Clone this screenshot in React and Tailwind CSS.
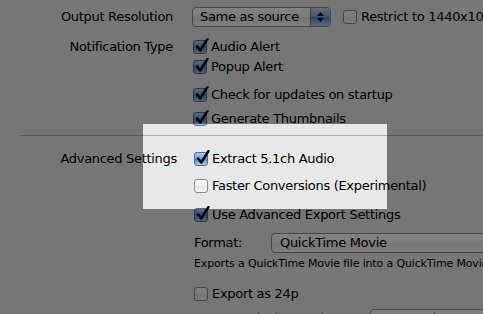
import React from 'react';

const font = { fontFamily: '"Lucida Grande", "DejaVu Sans", sans-serif' };

const Check = ({ checked }) => (
    <span
        className={`relative inline-block w-[14px] h-[14px] shrink-0 rounded-[3px] border ${
            checked
                ? 'border-[#4a6a9a] bg-[linear-gradient(#b5cdf0,#6a9ae0_50%,#4a80d6_51%,#a8d0f8)]'
                : 'border-[#8a8a8a] bg-[linear-gradient(#ffffff,#f0f0f0_50%,#e2e2e2_51%,#fafafa)]'
        }`}
    >
        {checked && (
            <svg className="absolute left-[1px] top-[-3px]" width="14" height="15" viewBox="0 0 14 15">
                <path d="M2 8.5 L5.2 12.5 L12.5 1" fill="none" stroke="#000" strokeWidth="2.4" strokeLinecap="round" strokeLinejoin="round" />
            </svg>
        )}
    </span>
);

const CheckRow = ({ checked, children, className = '' }) => (
    <div className={`flex items-center gap-[4px] h-[20px] ${className}`}>
        <Check checked={checked} />
        <span className="whitespace-nowrap">{children}</span>
    </div>
);

const Label = ({ children, w = 'w-[173px]' }) => (
    <div className={`${w} shrink-0 text-right whitespace-nowrap`}>{children}</div>
);

// aqua popup button face
const popup = 'h-[20px] shrink-0 rounded-[4px] border border-[#8c8c8c] bg-[linear-gradient(#ffffff,#f4f4f4_50%,#e6e6e6_51%,#fbfbfb)] pl-[8px] leading-[18px] whitespace-nowrap';

export default function App() {
    return (
        <div className="relative w-[483px] h-[314px] overflow-hidden bg-[#e8e8e8] text-[13px] tracking-[-0.3px] text-black" style={font}>
            <div className="flex flex-col pt-[7px]">
                <div className="flex items-center h-[20px]">
                    <Label>Output Resolution</Label>
                    <div className="ml-[19px] w-[139px] h-[20px] shrink-0 flex rounded-[4px] border border-[#8c8c8c] overflow-hidden bg-[linear-gradient(#ffffff,#f4f4f4_50%,#e6e6e6_51%,#fbfbfb)]">
                        <span className="flex-1 pl-[7px] leading-[18px]">Same as source</span>
                        <span className="w-[20px] border-l border-[#6a7fa0] bg-[linear-gradient(#c2d6f2,#7ca4e0_50%,#5a8ad8_51%,#a9cdf5)] flex flex-col items-center justify-center gap-[2px]">
                            <svg width="7" height="4" viewBox="0 0 7 4"><path d="M0 4 L3.5 0 L7 4 Z" fill="#111" /></svg>
                            <svg width="7" height="4" viewBox="0 0 7 4"><path d="M0 0 L3.5 4 L7 0 Z" fill="#111" /></svg>
                        </span>
                    </div>
                    <CheckRow className="ml-[12px]">Restrict to 1440x1080</CheckRow>
                </div>

                <div className="flex mt-[10px]">
                    <Label><div className="h-[20px] leading-[20px]">Notification Type</div></Label>
                    <div className="ml-[20px] flex flex-col">
                        <CheckRow checked>Audio Alert</CheckRow>
                        <CheckRow checked>Popup Alert</CheckRow>
                        <CheckRow checked className="mt-[8px]">Check for updates on startup</CheckRow>
                        <CheckRow checked className="mt-[4px]">Generate Thumbnails</CheckRow>
                    </div>
                </div>

                <div className="ml-[20px] mt-[6px] h-px bg-[#a9a9a9]" />

                <div className="flex mt-[13px]">
                    <Label w="w-[177px]"><div className="h-[20px] leading-[20px]">Advanced Settings</div></Label>
                    <div className="ml-[17px] flex flex-col">
                        <CheckRow checked>Extract 5.1ch Audio</CheckRow>
                        <CheckRow className="mt-[7px]">Faster Conversions (Experimental)</CheckRow>
                        <CheckRow checked className="mt-[9px]">Use Advanced Export Settings</CheckRow>
                        <div className="flex items-center h-[20px] mt-[8px]">
                            <span className="w-[77px] shrink-0">Format:</span>
                            <div className={`w-[260px] ${popup}`}>QuickTime Movie</div>
                        </div>
                        <div className="h-[16px] mt-[3px] text-[11px] tracking-[-0.15px] leading-[16px] whitespace-nowrap">
                            Exports a QuickTime Movie file into a QuickTime Movie container.
                        </div>
                        <CheckRow className="mt-[12px]">Export as 24p</CheckRow>
                        <div className="flex items-center h-[20px] mt-[5px]">
                            <span className="w-[176px] shrink-0 whitespace-nowrap">Inverse Telecine Mode</span>
                            <div className={`w-[120px] ${popup}`}>Automatic</div>
                        </div>
                    </div>
                </div>
            </div>

            {/* spotlight over the advanced options */}
            <div className="absolute left-[143px] top-[124px] w-[244px] h-[85px] shadow-[0_0_0_2000px_rgba(0,0,0,0.49)]" />
        </div>
    );
}
